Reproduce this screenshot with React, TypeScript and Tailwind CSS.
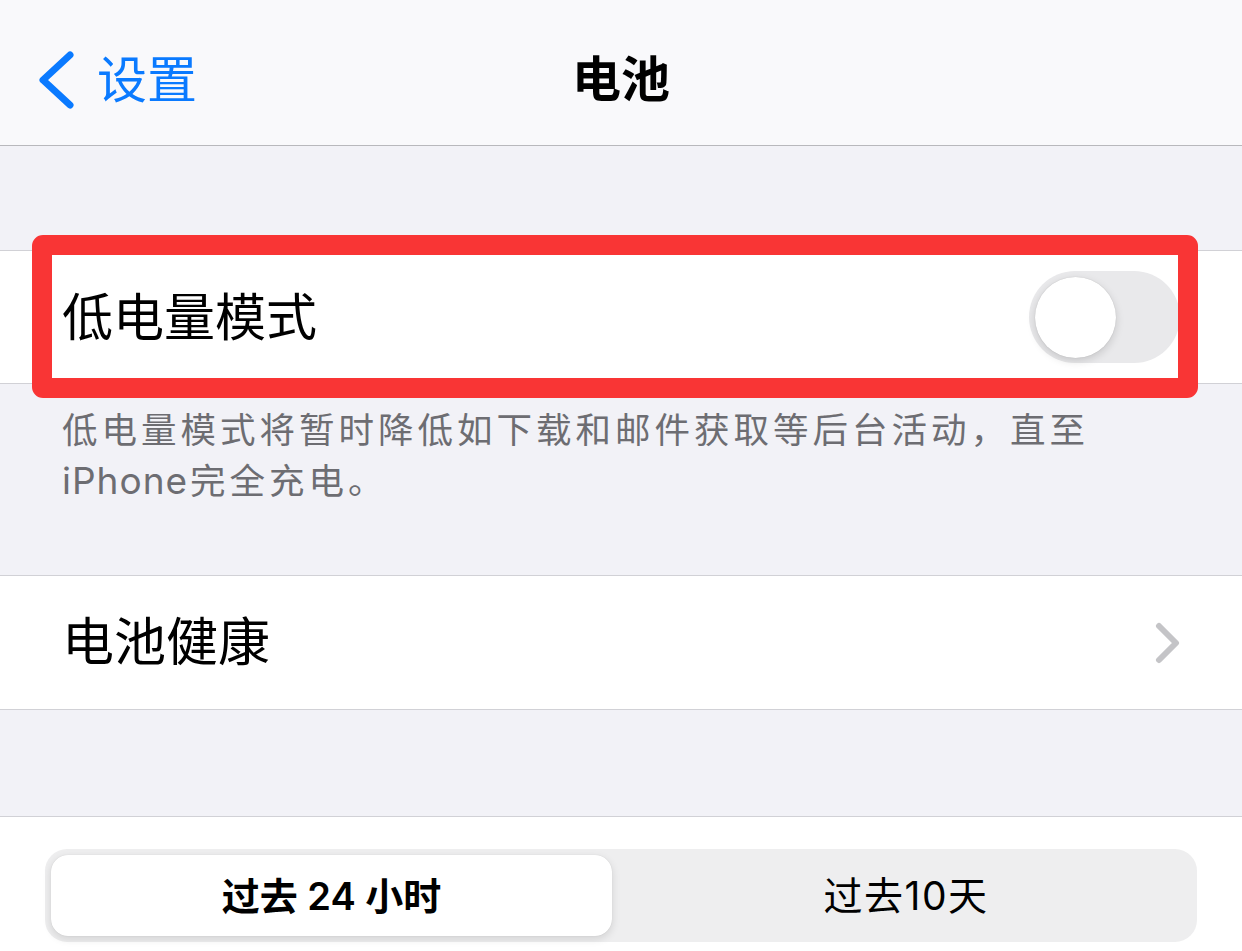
const font = { fontFamily: 'Inter, "Noto Sans CJK SC", sans-serif' }

export default function App() {
  return (
    <div className="w-[1242px] h-[951px] overflow-hidden bg-[#f2f2f7]" style={font}>
      <div className="relative h-[146px] bg-[#f9f9fb] border-b border-[#b8b8bc] flex items-center pt-[14px]">
        <div className="flex items-center pl-[38px] text-[#0a7aff]">
          <svg width="36" height="58" viewBox="0 0 36 58" fill="none">
            <polyline points="32,4 5,29 32,54" stroke="currentColor" strokeWidth="7" strokeLinecap="round" strokeLinejoin="round" />
          </svg>
          <span className="text-[50px] leading-none ml-[23px]">设置</span>
        </div>
        <div className="absolute left-0 right-0 top-[14px] bottom-0 flex items-center justify-center pointer-events-none">
          <span className="text-[49px] leading-none font-semibold text-black">电池</span>
        </div>
      </div>

      <div className="h-[104px]" />

      <div className="relative">
        <div className="h-[134px] bg-white border-y border-[#d1d1d6] flex items-center justify-between px-[62px]">
          <span className="text-[51px] leading-none text-black">低电量模式</span>
          <div className="relative w-[151px] h-[92px] rounded-full bg-[#e9e9eb]">
            <div className="absolute left-[6px] top-[6px] w-[81px] h-[81px] rounded-full bg-white shadow-[0_3px_8px_rgba(0,0,0,0.15),0_0_1px_rgba(0,0,0,0.2)]" />
          </div>
        </div>
        <div className="absolute top-[-15px] bottom-[-14px] left-[32px] right-[44px] border-[20px] border-[#f93535] rounded-[11px]" />
      </div>

      <div className="h-[191px] px-[62px] pt-[22px] text-[35.5px] leading-[50px] tracking-[4px] text-[#6d6d72]">
        低电量模式将暂时降低如下载和邮件获取等后台活动，直至
        <br />
        <span className="text-[37px] tracking-[1px] mr-[2px]">iPhone</span>完全充电。
      </div>

      <div className="h-[135px] bg-white border-y border-[#d1d1d6] flex items-center justify-between pl-[62px] pr-[60px]">
        <span className="text-[52px] leading-none text-black">电池健康</span>
        <svg width="28" height="42" viewBox="0 0 28 42" fill="none">
          <polyline points="5,4 22,21 5,38" stroke="#c4c4c7" strokeWidth="6" strokeLinecap="round" strokeLinejoin="round" />
        </svg>
      </div>

      <div className="h-[106px]" />

      <div className="bg-white border-t border-[#d1d1d6] h-[200px] pt-[32px] px-[45px]">
        <div className="h-[93px] rounded-[22px] bg-[#eeeeef] p-[6px] grid grid-cols-2">
          <div className="mr-[9px] rounded-[17px] bg-white shadow-[0_3px_8px_rgba(0,0,0,0.12),0_0_1px_rgba(0,0,0,0.15)] flex items-center justify-center">
            <span className="text-[38px] leading-none font-semibold text-black">过去 24 小时</span>
          </div>
          <div className="flex items-center justify-center">
            <span className="text-[39px] leading-none tracking-[1.5px] text-black">过去10天</span>
          </div>
        </div>
      </div>
    </div>
  )
}
